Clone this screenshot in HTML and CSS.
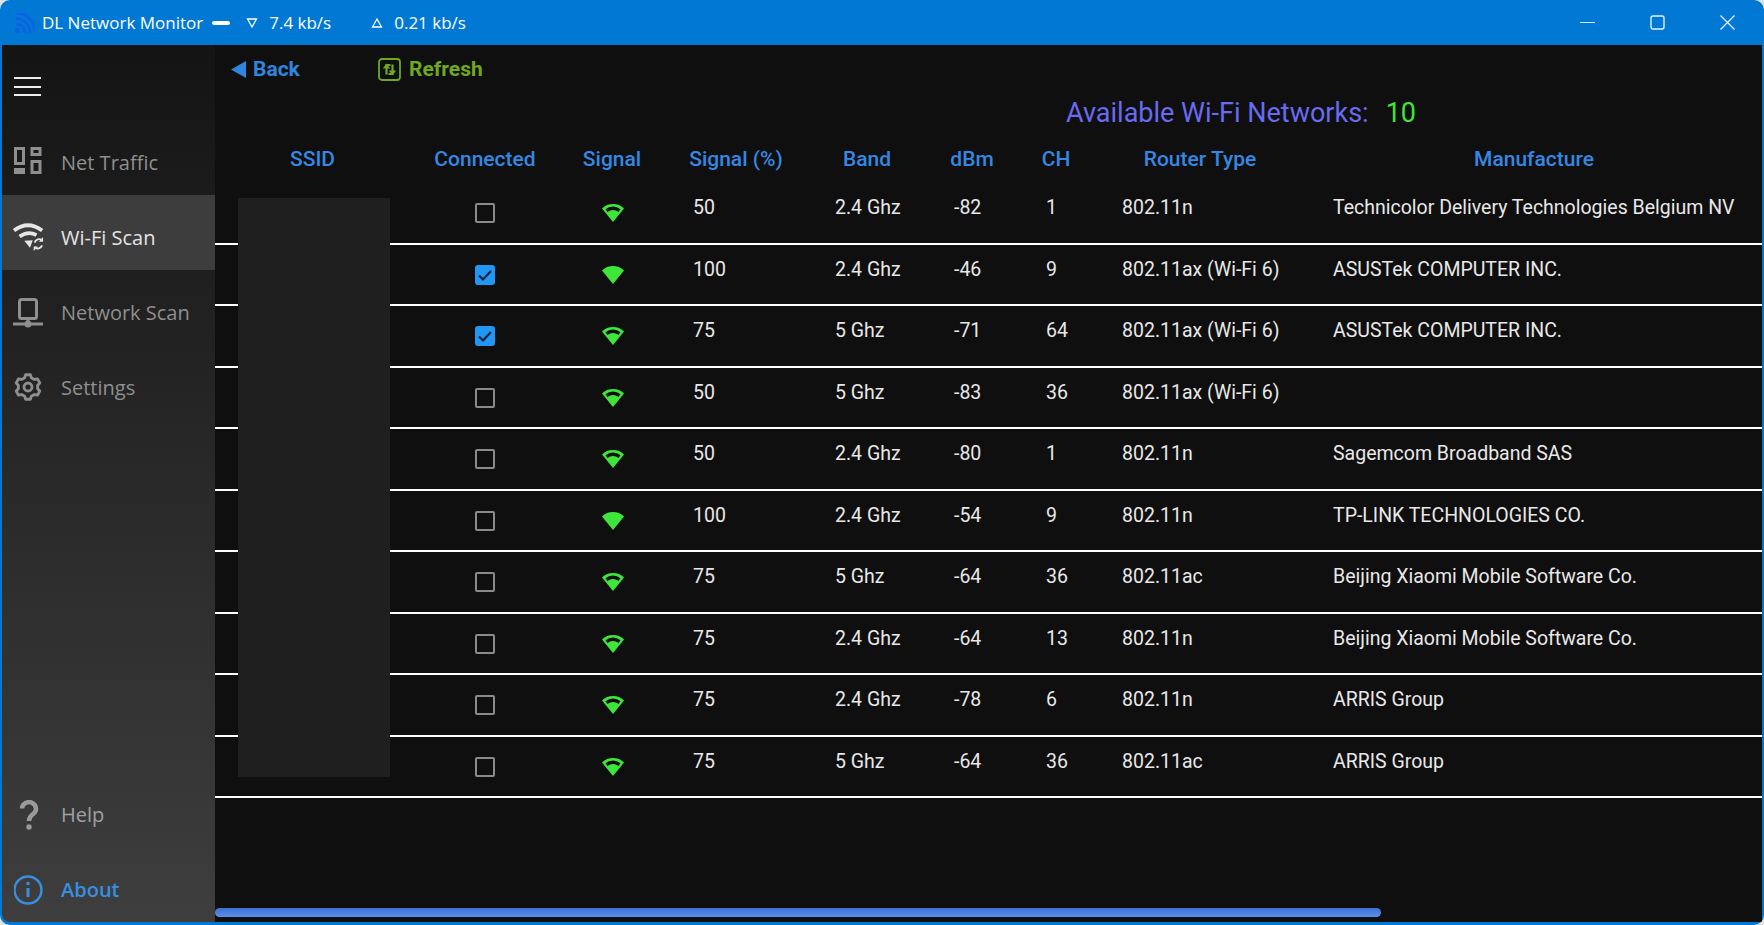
FILE: index.html
```html
<!DOCTYPE html>
<html lang="en">
  <head>
    <meta charset="UTF-8" />
    <title>DL Network Monitor</title>
    <link rel="stylesheet" href="styles.css">
  </head>
  <body>
    <div class="window">
      <!-- Title bar -->
      <header class="titlebar">
        <svg class="app-icon" viewBox="0 0 20 20" fill="none" stroke="#0d62e2" stroke-width="3"><path d="M1 0a19 19 0 0 1 19 20"/><path d="M1 5.500a14 14 0 0 1 14 14.500"/><path d="M1 11a9 9 0 0 1 9 9"/><rect x="0" y="15" width="5" height="5" fill="#0d62e2" stroke="none"/></svg>
        <span class="app-name">DL Network Monitor</span>
        <span class="dash"></span>
        <svg class="speed-icon" viewBox="0 0 12 12"><path d="M1.500 2h9L6 10z" fill="none" stroke="#fff" stroke-width="1.300"/></svg>
        <span class="speed down">7.4 kb/s</span>
        <svg class="speed-icon" viewBox="0 0 12 12"><path d="M1.500 10h9L6 2z" fill="none" stroke="#fff" stroke-width="1.300"/></svg>
        <span class="speed">0.21 kb/s</span>
        <div class="window-buttons">
          <svg viewBox="0 0 15 15"><path d="M0 7.500h15" stroke="#d8eeff" stroke-width="1.200"/></svg>
          <svg viewBox="0 0 15 15"><rect x="1" y="1" width="13" height="13" rx="2" fill="none" stroke="#e4f3ff" stroke-width="1.400"/></svg>
          <svg viewBox="0 0 15 15"><path d="M.5.500l14 14M14.500.500l-14 14" stroke="#e4f3ff" stroke-width="1.300"/></svg>
        </div>
      </header>

      <div class="body">
        <!-- Side menu -->
        <nav class="sidebar">
          <div class="hamburger"><span></span><span></span><span></span></div>
          <a class="nav-item">
            <svg viewBox="0 0 30 30" fill="none" stroke="#8f8f8f" stroke-width="3"><rect x="1.500" y="1.500" width="8" height="15"/><rect x="18" y="1.500" width="8" height="6"/><rect x="1.500" y="22.500" width="8" height="3"/><rect x="18" y="14.500" width="8" height="11"/></svg>
            Net Traffic
          </a>
          <a class="nav-item selected">
            <svg viewBox="-1 0 32 30" fill="none" stroke="#e6e6e6" overflow="visible"><path d="M-1 8Q14-3 29 8" stroke-width="4"/><path d="M5 14.500Q14 8 23 13" stroke-width="4"/><path d="M10 19l9-.500-3 8z" fill="#e6e6e6" stroke="none"/><path d="M21 21a5 5 0 0 1 8-2.500M29 24a5 5 0 0 1-8 2" stroke-width="2"/><path d="M30 15v5h-4.500zM20 30v-5h4.500z" fill="#e6e6e6" stroke="none"/></svg>
            Wi-Fi Scan
          </a>
          <a class="nav-item">
            <svg viewBox="0 0 30 30" fill="none" stroke="#8f8f8f" stroke-width="3" overflow="visible"><rect x="5.500" y="2.500" width="17" height="19" rx="2"/><path d="M-1 27h30"/><path d="M14 23v4"/><circle cx="14" cy="27" r="3.500" fill="#8f8f8f" stroke="none"/></svg>
            Network Scan
          </a>
          <a class="nav-item">
            <svg viewBox="1 0 30 30" fill="none" stroke="#8f8f8f" stroke-width="2.800" stroke-linejoin="round"><circle cx="15" cy="15" r="4"/><path d="M11.650 5.790L12.610 2.730H17.390L18.350 5.790L21.300 7.490L24.440 6.800L26.820 10.930L24.650 13.300V16.700L26.820 19.070L24.440 23.200L21.300 22.510L18.350 24.210L17.390 27.270H12.610L11.650 24.210L8.700 22.510L5.560 23.200L3.180 19.070L5.350 16.700V13.300L3.180 10.930L5.560 6.800L8.700 7.490z"/></svg>
            Settings
          </a>
          <a class="nav-item help">
            <svg viewBox="0 0 20 30" fill="none" stroke="#9a9a9a" stroke-width="4.500"><path d="M3 8.500a7 6.500 0 1 1 11 5.500c-2.500 2-4 3-4 7"/><circle cx="10" cy="27" r="2.700" fill="#9a9a9a" stroke="none"/></svg>
            Help
          </a>
          <a class="nav-item about">
            <svg viewBox="1 0 30 30" fill="none" stroke="#3a8ee0" stroke-width="2.500"><circle cx="15" cy="15" r="13.500"/><path d="M15 13v9" stroke-width="3"/><circle cx="15" cy="8.500" r="1.800" fill="#3a8ee0" stroke="none"/></svg>
            About
          </a>
        </nav>

        <!-- Wi-Fi scan page -->
        <main class="content">
          <div class="toolbar">
            <a class="back"><svg viewBox="0 0 16 17"><path d="M15 0v17L0 8.500z" fill="#2f86de"/></svg>Back</a>
            <a class="refresh">
              <svg viewBox="0 0 23 23" fill="none" stroke="#6fa820" stroke-width="1.800"><rect x="1" y="1" width="21" height="21" rx="3"/><path d="M8.500 16.500V7h4M14.500 6.500V16h-4" stroke-width="2.200"/><path d="M4.800 10.500h7.400L8.500 5.500zM10.800 12.500h7.400L14.500 17.500z" fill="#6fa820" stroke="none"/></svg>
              Refresh
            </a>
          </div>
          <div class="summary">
            <span class="summary-label">Available Wi-Fi Networks:</span>
            <span class="summary-count">10</span>
          </div>

          <div class="wifi-table" id="wifiTable">
            <div class="ssid-mask"></div>
            <div class="row head">
              <div>SSID</div><div>Connected</div><div>Signal</div><div>Signal (%)</div><div>Band</div><div>dBm</div><div>CH</div><div>Router Type</div><div>Manufacture</div>
            </div>
          </div>

          <div class="scrollbar"><div class="scrollbar-thumb"></div></div>
        </main>
      </div>
    </div>

    <script>
      const networks = [
        [false, 50, "2.4 Ghz", -82, 1, "802.11n", "Technicolor Delivery Technologies Belgium NV"],
        [true, 100, "2.4 Ghz", -46, 9, "802.11ax (Wi-Fi 6)", "ASUSTek COMPUTER INC."],
        [true, 75, "5 Ghz", -71, 64, "802.11ax (Wi-Fi 6)", "ASUSTek COMPUTER INC."],
        [false, 50, "5 Ghz", -83, 36, "802.11ax (Wi-Fi 6)", ""],
        [false, 50, "2.4 Ghz", -80, 1, "802.11n", "Sagemcom Broadband SAS"],
        [false, 100, "2.4 Ghz", -54, 9, "802.11n", "TP-LINK TECHNOLOGIES CO."],
        [false, 75, "5 Ghz", -64, 36, "802.11ac", "Beijing Xiaomi Mobile Software Co."],
        [false, 75, "2.4 Ghz", -64, 13, "802.11n", "Beijing Xiaomi Mobile Software Co."],
        [false, 75, "2.4 Ghz", -78, 6, "802.11n", "ARRIS Group"],
        [false, 75, "5 Ghz", -64, 36, "802.11ac", "ARRIS Group"]
      ];

      // Solid wedge for full signal, a dark crescent cut out of it otherwise
      function signalIcon(pct) {
        const wedge = '<path d="M0 5.500a16 16 0 0 1 22 0L11 19z" fill="#3fe63a"/>';
        const gap = '<path d="M3.500 6.300a11.500 11.500 0 0 1 15 0l-2 2.700a8.500 8.500 0 0 0-11 0z" fill="#0f0f0f"/>';
        return '<svg viewBox="0 0 22 19">' + wedge + (pct === 100 ? "" : gap) + "</svg>";
      }

      const table = document.getElementById("wifiTable");
      networks.forEach((n) => {
        const box = n[0]
          ? '<span class="check on"><svg viewBox="0 0 20 20"><path d="M4 10.500l4 4 8-8.500" fill="none" stroke="#10233f" stroke-width="2.200"/></svg></span>'
          : '<span class="check"></span>';
        const row = document.createElement("div");
        row.className = "row";
        row.innerHTML =
          "<div></div>" +
          '<div class="icon-cell">' + box + "</div>" +
          '<div class="icon-cell signal">' + signalIcon(n[1]) + "</div>" +
          '<div class="cell-pct">' + n[1] + '</div><div class="cell-tight">' + n[2] + "</div><div>" + n[3] + "</div><div>" + n[4] + "</div><div>" + n[5] + '</div><div class="cell-tight">' + n[6] + "</div>";
        table.appendChild(row);
      });
    </script>
  </body>
</html>
```

FILE: styles.css
```css
html, body {
  margin: 0;
  padding: 0;
  height: 100%;
  background-color: #dfe3e6;
  overflow: hidden;
}
.window {
  box-sizing: border-box;
  width: 1764px;
  height: 925px;
  background-color: #0078d4;
  border-radius: 10px;
  padding: 0 2px 3px 2px;
  display: flex;
  flex-direction: column;
  overflow: hidden;
  font-family: "Open Sans", sans-serif;
}

/* title bar */
.titlebar {
  height: 45px;
  flex: none;
  display: flex;
  align-items: center;
  color: #fff;
  font-size: 17px;
  padding-left: 13px;
}
.app-icon {
  width: 20px;
  height: 20px;
  margin-right: 7px;
}
.dash {
  width: 18px;
  height: 4px;
  border-radius: 2px;
  background-color: #fff;
  margin: 0 16px 0 9px;
}
.speed-icon {
  width: 12px;
  height: 12px;
  margin-right: 11px;
}
.speed.down {
  margin-right: 40px;
}
.window-buttons {
  margin-left: auto;
  display: flex;
  gap: 55px;
  padding-right: 27px;
  align-items: center;
}
.window-buttons svg {
  width: 15px;
  height: 15px;
}

.body {
  flex: 1;
  display: flex;
  min-height: 0;
}

/* side menu */
.sidebar {
  width: 213px;
  flex: none;
  display: flex;
  flex-direction: column;
  background: linear-gradient(#141414, #3e3e3e);
  border-radius: 0 0 0 8px;
  color: #8f8f8f;
  font-size: 20px;
}
.hamburger {
  height: 75px;
  box-sizing: border-box;
  padding: 32px 0 0 12px;
}
.hamburger span {
  display: block;
  width: 27px;
  height: 2px;
  background-color: #ececec;
  margin-bottom: 6.500px;
}
.nav-item {
  height: 75px;
  box-sizing: border-box;
  padding: 9px 0 0 12px;
  display: flex;
  align-items: center;
  gap: 17px;
}
.nav-item svg {
  width: 30px;
  height: 30px;
  flex: none;
}
.nav-item.selected {
  background-color: #3d3d3d;
  color: #e4e4e4;
}
.nav-item.help {
  margin-top: auto;
  padding-top: 10px;
  color: #a0a0a0;
}
.nav-item.about {
  padding-top: 10px;
  color: #3a8ee0;
  font-weight: 600;
}

/* main page */
.content {
  flex: 1;
  position: relative;
  background-color: #0f0f0f;
  display: flex;
  flex-direction: column;
  min-width: 0;
}
.toolbar {
  height: 48px;
  display: flex;
  align-items: center;
  font-family: Roboto, sans-serif;
  font-weight: 700;
  font-size: 21px;
  padding-left: 16px;
}
.toolbar a {
  display: flex;
  align-items: center;
}
.back {
  color: #2f86de;
  width: 147px;
}
.back svg {
  width: 16px;
  height: 17px;
  margin-right: 6px;
}
.refresh {
  color: #6fa820;
}
.refresh svg {
  width: 23px;
  height: 23px;
  margin-right: 8px;
}
.summary {
  height: 46px;
  margin: -3.500px 0 11px;
  display: flex;
  align-items: center;
  font-family: Roboto, sans-serif;
  font-size: 27px;
  padding-left: 851px;
}
.summary-label {
  color: #6a6af0;
  margin-right: 17px;
}
.summary-count {
  color: #3fe63a;
}

/* table */
.wifi-table {
  position: relative;
  color: #e8e8e8;
  font-family: Roboto, sans-serif;
  font-size: 19.500px;
}
.row {
  display: grid;
  grid-template-columns: 195px 150px 104px 144px 118px 92px 76px 212px 456px;
  height: 61.500px;
  box-sizing: border-box;
  border-bottom: 2px solid #fff;
  align-items: start;
}
.row > div {
  padding: 13px 0 0 28px;
  white-space: nowrap;
}
.row > .cell-pct {
  padding-left: 29px;
}
.row > .cell-tight {
  padding-left: 27px;
}
.row > .icon-cell {
  padding: 20px 0 0;
  display: flex;
  justify-content: center;
}
.row > .signal {
  padding-left: 1px;
}
.row.head {
  height: 36.500px;
  border-bottom: none;
  color: #3488e4;
  font-weight: 500;
  font-size: 21px;
  text-align: center;
}
.row.head > div {
  padding: 0;
}
.signal svg {
  width: 22px;
  height: 19px;
}
.check {
  box-sizing: border-box;
  width: 20px;
  height: 20px;
  border: 2px solid #8a8a8a;
  border-radius: 2px;
}
.check.on {
  border: none;
  border-radius: 3px;
  background-color: #2196f3;
}
.check svg {
  display: block;
}
.ssid-mask {
  position: absolute;
  left: 23px;
  top: 51.500px;
  width: 152px;
  height: 579px;
  background-color: #1f1f1f;
}
.scrollbar {
  position: absolute;
  left: 0;
  right: 0;
  bottom: 5px;
  height: 9px;
}
.scrollbar-thumb {
  width: 1166px;
  height: 100%;
  border-radius: 5px;
  background: linear-gradient(#3c70d4, #5c90ea);
}
```
